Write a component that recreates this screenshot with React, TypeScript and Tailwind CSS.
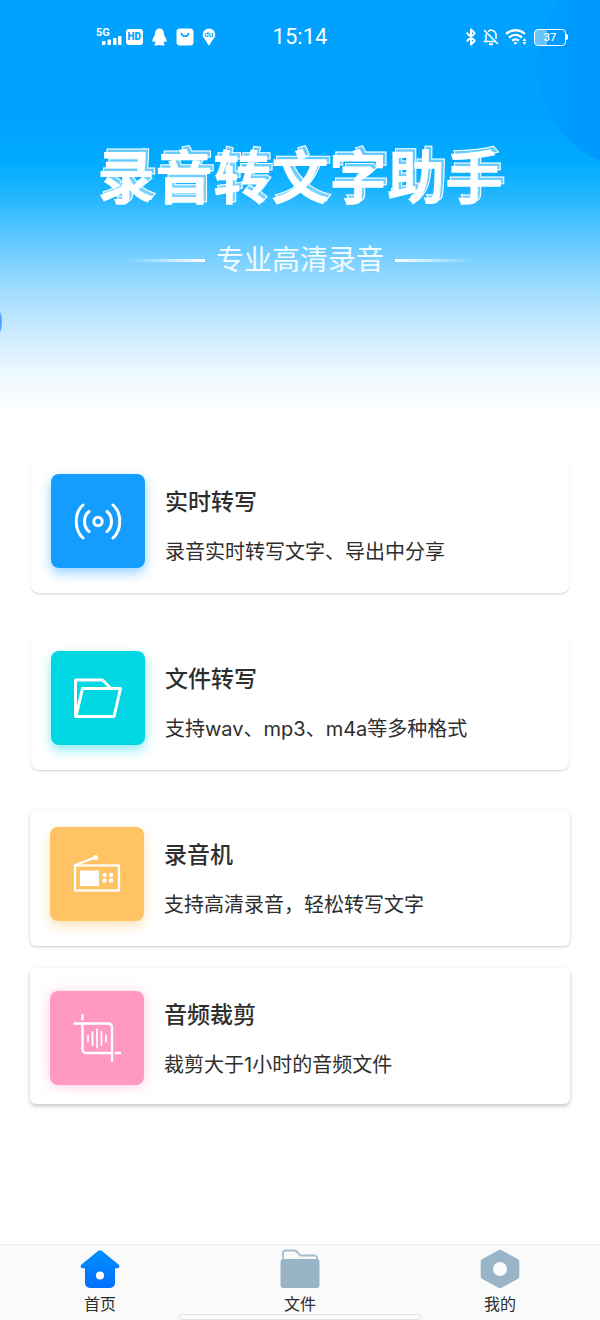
import React from 'react';
import { Bluetooth } from 'lucide-react';

interface Feature {
  id: string;
  title: string;
  description: string;
  icon: React.ReactNode;
  tile: string;
  card: string;
}

const StatusBar = () => (
  <div className="relative grid h-[74px] grid-cols-3 items-center px-8 text-white">
    <div className="flex items-center gap-2 pl-16">
      <div className="-mr-1 flex items-end">
        <span className="self-start font-['Roboto'] text-[11px] leading-3 font-bold">5G</span>
        <svg className="-ml-2 h-5 w-5" viewBox="0 0 20 20" fill="currentColor" aria-hidden="true">
          <rect x="0" y="14" width="3.500" height="4" rx="1" />
          <rect x="5.500" y="12.500" width="3.500" height="5.500" rx="1" />
          <rect x="11" y="11" width="3.500" height="7" rx="1" />
          <rect x="16" y="9" width="3.500" height="9" rx="1" />
        </svg>
      </div>
      <span className="flex h-4 w-[17px] shrink-0 items-center justify-center rounded-[3px] bg-white font-['Roboto'] text-[10px] leading-none font-black text-[#00a2ff]">
        HD
      </span>
      <svg className="h-[18px] w-[17px] shrink-0" viewBox="0 0 17 18" fill="currentColor" aria-hidden="true">
        <path d="M8.5 0.5C5.3 0.5 4 3 4 6c0 2-2.6 4.3-2.6 7 0 1.200.8 1.200 2 .1.200 1 .6 1.700 1.200 2.400-.900.300-1.500.800-1.400 1.300.2.900 3.600.8 5.300.2 1.700.6 5.100.7 5.300-.2.1-.5-.5-1-1.400-1.300.6-.7 1-1.400 1.200-2.400 1.200 1.100 2 1.100 2-.1 0-2.700-2.600-5-2.600-7 0-3-1.300-5.500-4.500-5.500z" />
      </svg>
      <svg className="h-[18px] w-[18px] shrink-0" viewBox="0 0 18 18" aria-hidden="true">
        <rect x="0.500" y="0.500" width="17" height="17" rx="3.500" fill="white" />
        <path d="M5.500 5.500c1 3.700 6 3.700 7 0" fill="none" stroke="#00a2ff" strokeWidth="1.600" strokeLinecap="round" />
      </svg>
      <span className="relative flex h-[18px] w-[14px] shrink-0 justify-center">
        <svg className="absolute inset-0 h-[18px] w-[14px]" viewBox="0 0 14 18" fill="currentColor" aria-hidden="true">
          <path d="M7 .5a6.300 6.300 0 0 0-6.300 6.300C.7 10 4 12 6 16.500c.4 1.100 1.600 1.100 2 0 2-4.500 5.300-6.500 5.300-9.700A6.300 6.300 0 0 0 7 .5z" />
        </svg>
        <span className="relative font-['Roboto'] text-[8px] leading-[13px] font-medium text-[#00a2ff]">du</span>
      </span>
    </div>
    <time className="text-center font-['Roboto'] text-[22px] leading-6">15:14</time>
    <div className="flex items-center justify-end gap-[2px]">
      <Bluetooth className="h-[18px] w-[18px]" strokeWidth={2.6} aria-hidden="true" />
      <svg className="h-[18px] w-[18px]" viewBox="0 0 18 18" fill="none" stroke="currentColor" strokeWidth="1.6" aria-hidden="true">
        <path d="M4 6v7.500h9.500M6 3.500c3-3 8-.5 8 3.500v4" />
        <path d="M2 2l14 14M1.500 13.500H4" />
        <path d="M7 16.200h4" strokeWidth="2" />
      </svg>
      <svg className="ml-[2px] h-5 w-[24px]" viewBox="0 0 24 20" fill="none" stroke="currentColor" strokeWidth="2.300" aria-hidden="true">
        <path d="M2 7c5.500-5 13.500-5 19 0M5 10.500c4-3.400 9-3.400 13 0M8 13.700c2-1.700 5-1.700 7 0" />
        <path d="M9.500 15.500c1.300-.8 2.700-.8 4 0l-2 2.500z" fill="currentColor" stroke="none" />
        <path d="M20.500 11l2 3h-4zM20.500 18l2-3h-4z" fill="currentColor" stroke="none" />
      </svg>
      <div className="ml-1 flex items-center">
        <span className="flex h-[17px] w-8 items-center justify-center rounded-[4px] border border-white bg-linear-to-r from-white/40 from-40% to-transparent to-40% font-['Roboto'] text-[11px] leading-none font-medium">
          37
        </span>
        <span className="h-[6px] w-[2px] rounded-r-sm bg-white" />
      </div>
    </div>
  </div>
);

const LiveIcon = () => (
  <svg className="h-12 w-12" viewBox="0 0 48 48" fill="none" stroke="white" strokeWidth="3" strokeLinecap="round" aria-hidden="true">
    <circle cx="24" cy="24.500" r="4.200" />
    <path d="M15 14.500c-6 5-6 15 0 20M33 14.500c6 5 6 15 0 20M9 8c-9 8-9 25 0 33M39 8c9 8 9 25 0 33" />
  </svg>
);

const FolderIcon = () => (
  <svg className="h-12 w-12" viewBox="0 0 48 48" fill="none" stroke="white" strokeWidth="3" strokeLinejoin="round" aria-hidden="true">
    <path d="M1.500 42.500V6h27l8 8" />
    <path d="M8.500 14.500h38l-6.500 28H2z" />
  </svg>
);

const RadioIcon = () => (
  <svg className="h-12 w-12" viewBox="0 0 48 48" fill="white" aria-hidden="true">
    <rect x="2" y="15.500" width="44" height="25" fill="none" stroke="white" strokeWidth="2.200" />
    <path d="M2.500 15L22 7.500" fill="none" stroke="white" strokeWidth="2.200" />
    <circle cx="22.500" cy="7.500" r="2.600" />
    <rect x="7" y="20.500" width="19" height="15.500" />
    <circle cx="31.500" cy="25" r="2.200" />
    <circle cx="38" cy="25" r="2.200" />
    <circle cx="31.500" cy="30.500" r="2.200" />
    <circle cx="38" cy="30.500" r="2.200" />
  </svg>
);

const TrimIcon = () => (
  <svg className="h-12 w-12" viewBox="0 0 48 48" fill="none" stroke="white" strokeWidth="2.400" strokeLinecap="round" aria-hidden="true">
    <path d="M1.500 9.500h34a3.500 3.500 0 0 1 3.500 3.500v34M9.500 1.500v4M9.500 9.500v26a3.500 3.500 0 0 0 3.500 3.500h26M43 39h4" />
    <path d="M15 21.500v6M19.500 18v13M24 15.500v18M28.500 18v13M33 21.500v6" strokeWidth="1.800" />
  </svg>
);

const features: Feature[] = [
  {
    id: 'live',
    title: '实时转写',
    description: '录音实时转写文字、导出中分享',
    icon: <LiveIcon />,
    tile: 'bg-[#149dff] shadow-[0_5px_12px_rgba(20,157,255,0.45)]',
    card: 'mx-[31px] rounded-lg pt-[17px] shadow-[0_1px_2px_rgba(0,0,0,0.18)]',
  },
  {
    id: 'file',
    title: '文件转写',
    description: '支持wav、mp3、m4a等多种格式',
    icon: <FolderIcon />,
    tile: 'bg-[#00d7e2] shadow-[0_5px_12px_rgba(0,215,226,0.45)]',
    card: 'mx-[31px] mt-[41px] rounded-lg pt-[17px] shadow-[0_1px_2px_rgba(0,0,0,0.18)]',
  },
  {
    id: 'recorder',
    title: '录音机',
    description: '支持高清录音，轻松转写文字',
    icon: <RadioIcon />,
    tile: 'bg-[#ffc363] shadow-[0_5px_12px_rgba(255,195,99,0.45)]',
    card: 'mx-[30px] mt-10 rounded-md pt-[17px] shadow-[0_1px_3px_rgba(0,0,0,0.22)]',
  },
  {
    id: 'trim',
    title: '音频裁剪',
    description: '裁剪大于1小时的音频文件',
    icon: <TrimIcon />,
    tile: 'mt-1 bg-[#ff99c2] shadow-[0_1px_12px_rgba(255,153,194,0.5)]',
    card: 'mx-[30px] mt-[22px] rounded-md pt-[19px] shadow-[0_2px_4px_rgba(0,0,0,0.24)]',
  },
];

const FeatureCard = ({ feature }: { feature: Feature }) => (
  <button type="button" className={`flex h-[136px] items-start gap-5 bg-white px-5 text-left text-[#2e2e2e] ${feature.card}`}>
    <span className={`flex size-[94px] shrink-0 items-center justify-center rounded-lg ${feature.tile}`}>
      {feature.icon}
    </span>
    <span className="flex flex-col gap-5 pt-3">
      <span className="text-[23px] leading-8 font-medium">{feature.title}</span>
      <span className="text-[20px] leading-7 whitespace-nowrap">{feature.description}</span>
    </span>
  </button>
);

const HomeIcon = () => (
  <svg className="h-10 w-10" viewBox="0 0 40 40" aria-hidden="true">
    <defs>
      <linearGradient id="home-fill" x1="0" y1="0" x2="0" y2="1">
        <stop offset="0" stopColor="#0090ff" />
        <stop offset="1" stopColor="#0070ff" />
      </linearGradient>
    </defs>
    <path
      d="M18 2q2-1.600 4 0l16.500 13.500q1.500 1.500.5 3-.5.800-2 .800h-2V34a5 5 0 0 1-5 5H10a5 5 0 0 1-5-5V19.300H3q-1.500 0-2-.8-1-1.500.5-3z"
      fill="url(#home-fill)"
    />
    <circle cx="20" cy="26.500" r="4" fill="white" />
  </svg>
);

const FilesIcon = () => (
  <svg className="h-10 w-10" viewBox="0 0 40 40" aria-hidden="true">
    <path d="M3 12V4q0-2.500 2.500-2.500h8.500q1.500 0 2.500 1L20.500 6.500h14q2 0 2.500 2l1 4" fill="none" stroke="#a7bdcc" strokeWidth="1.800" />
    <rect x="0.500" y="10" width="39" height="29" rx="3" fill="#9ab4c7" />
  </svg>
);

const MineIcon = () => (
  <svg className="h-10 w-10" viewBox="0 0 40 40" aria-hidden="true">
    <path
      fillRule="evenodd"
      d="M18.500 1.200q1.500-.8 3 0l16.500 9q1.300.8 1.300 2.300v15q0 1.500-1.300 2.300l-16.500 9q-1.500.8-3 0L2 29.800Q.7 29 .7 27.500v-15Q.7 11 2 10.200zM20 13a7 7 0 1 0 0 14a7 7 0 0 0 0-14z"
      fill="#9ab4c7"
    />
  </svg>
);

const tabs = [
  { label: '首页', icon: <HomeIcon /> },
  { label: '文件', icon: <FilesIcon /> },
  { label: '我的', icon: <MineIcon /> },
];

const TabBar = () => (
  <nav className="relative mt-auto grid h-[76px] grid-cols-3 border-t border-[#f0f0f0] bg-[#fafafa]">
    {tabs.map((tab) => (
      <a key={tab.label} href="#" className="flex flex-col items-center gap-[3px] pt-1 text-base leading-6 text-[#2e2e2e]">
        {tab.icon}
        <span>{tab.label}</span>
      </a>
    ))}
    <span className="absolute bottom-0 left-1/2 h-[6px] w-[242px] -translate-x-1/2 rounded-full border border-[#e2e2e2] bg-[#fcfcfc]" />
  </nav>
);

const App = () => {
  return (
    <div className="flex min-h-screen flex-col bg-white font-['Inter','Noto_Sans_CJK_SC',sans-serif]">
      <header className="relative h-[457px] overflow-hidden bg-[linear-gradient(to_bottom,#00a1ff_0px,#00a1ff_115px,#00abff_160px,#1ab4ff_190px,#52c4ff_230px,#8fd7ff_275px,#c4e9ff_325px,#eaf7ff_370px,#fff_412px)]">
        {/* decorative circles */}
        <span className="absolute -top-10 -right-[147px] size-[210px] rounded-full bg-linear-to-r from-[#009dff] to-[#008cff]" />
        <span className="absolute top-[292px] -left-[58px] size-[60px] rounded-full bg-[#4da3ff]" />
        <StatusBar />
        <div className="relative flex flex-col items-center pt-16 text-white">
          <h1
            data-text="录音转文字助手"
            className="relative text-[58px] leading-[80px] font-bold whitespace-nowrap before:absolute before:-top-[3px] before:left-[3px] before:text-white/40 before:content-[attr(data-text)] before:[-webkit-text-stroke:1px_white]"
          >
            录音转文字助手
          </h1>
          <div className="mt-[22px] flex items-center gap-[11px]">
            <span className="h-[3px] w-[77px] bg-linear-to-r from-transparent to-white" />
            <p className="text-[28px] leading-10 text-white/90">专业高清录音</p>
            <span className="h-[3px] w-[77px] bg-linear-to-l from-transparent to-white" />
          </div>
        </div>
      </header>
      <main className="flex flex-col">
        {features.map((feature) => (
          <FeatureCard key={feature.id} feature={feature} />
        ))}
      </main>
      <TabBar />
    </div>
  );
};

export default App;
